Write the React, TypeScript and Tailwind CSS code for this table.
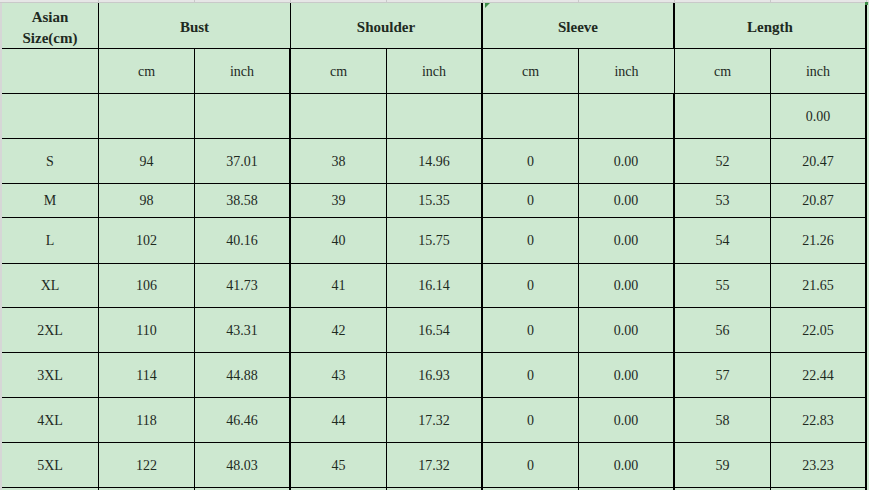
import React from 'react'

const rows = [
  ['S', '94', '37.01', '38', '14.96', '0', '0.00', '52', '20.47'],
  ['M', '98', '38.58', '39', '15.35', '0', '0.00', '53', '20.87'],
  ['L', '102', '40.16', '40', '15.75', '0', '0.00', '54', '21.26'],
  ['XL', '106', '41.73', '41', '16.14', '0', '0.00', '55', '21.65'],
  ['2XL', '110', '43.31', '42', '16.54', '0', '0.00', '56', '22.05'],
  ['3XL', '114', '44.88', '43', '16.93', '0', '0.00', '57', '22.44'],
  ['4XL', '118', '46.46', '44', '17.32', '0', '0.00', '58', '22.83'],
  ['5XL', '122', '48.03', '45', '17.32', '0', '0.00', '59', '23.23'],
]

// body row heights, measured from the sheet
const heights = ['h-[45px]', 'h-[34px]', 'h-[46px]', 'h-[44px]', 'h-[45px]', 'h-[45px]', 'h-[45px]', 'h-[45px]']

// right border per column in data rows (thick at group edges)
const rightBorder = [
  'border-r',
  'border-r',
  'border-r-2',
  'border-r',
  'border-r-2',
  'border-r',
  'border-r-2',
  'border-r',
  'border-r-2',
]

const colWidth = (i: number) => (i === 0 ? 'w-[97px]' : 'w-[96px]')

function Row({ cells, height }: { cells: string[]; height: string }) {
  return (
    <div className={`flex ${height}`}>
      {cells.map((c, i) => (
        <div
          key={i}
          className={`${colWidth(i)} ${rightBorder[i]} border-b border-black flex items-center justify-center shrink-0`}
        >
          {c}
        </div>
      ))}
    </div>
  )
}

export default function App() {
  const groups = ['Bust', 'Shoulder', 'Sleeve', 'Length']
  return (
    <div className="w-[869px] h-[490px] overflow-hidden bg-[#cde8d0] text-[14px] text-[#1e2a1f] [font-family:'Liberation_Serif','Times_New_Roman',serif]">
      {/* sheet grid lines above the table */}
      <div className="flex h-[3px] bg-[#e6e6e6] border-b border-[#c9c9c9]">
        <div className="w-[2px] shrink-0" />
        <div className="w-[97px] shrink-0 border-r border-[#c9c9c9]" />
        {[0, 1, 2, 3, 4, 5, 6, 7].map((i) => (
          <div key={i} className="w-[96px] shrink-0 border-r border-[#c9c9c9]" />
        ))}
      </div>
      <div className="flex">
        <div className="w-[2px] shrink-0 bg-[#d6d6d6]" />
        <div className="relative">
          {/* header */}
          <div className="flex h-[46px] font-bold text-[15px]">
            <div className="w-[97px] shrink-0 border-r border-b border-black flex items-center justify-center text-center leading-[21px] pt-1">
              Asian
              <br />
              Size(cm)
            </div>
            {groups.map((g, i) => (
              <div
                key={g}
                className={`relative w-[192px] shrink-0 border-b border-black flex items-center justify-center pt-[3px] ${
                  i === 0 ? 'border-r' : 'border-r-2'
                }`}
              >
                {g}
                {i === 1 && (
                  <span className="absolute -right-[2px] top-0 w-0 h-0 border-t-[5px] border-t-[#3f8f4a] border-r-[5px] border-r-transparent translate-x-[7px]" />
                )}
              </div>
            ))}
          </div>
          {/* unit row */}
          <div className="flex h-[45px]">
            <div className="w-[97px] shrink-0 border-r border-b border-black" />
            {['cm', 'inch', 'cm', 'inch', 'cm', 'inch', 'cm', 'inch'].map((u, i) => (
              <div
                key={i}
                className={`w-[96px] shrink-0 border-b border-black flex items-center justify-center ${
                  i === 1 || i === 3 || i === 7 ? 'border-r-2' : 'border-r'
                }`}
              >
                {u}
              </div>
            ))}
          </div>
          <Row cells={['', '', '', '', '', '', '', '', '0.00']} height="h-[45px]" />
          {rows.map((r, i) => (
            <Row key={r[0]} cells={r} height={heights[i]} />
          ))}
          <Row cells={['', '', '', '', '', '', '', '', '']} height="h-[45px]" />
          <span className="absolute right-0 top-0 w-[3px] h-[3px] bg-[#3f8f4a] translate-x-[1px] -translate-y-[1px]" />
        </div>
      </div>
    </div>
  )
}
